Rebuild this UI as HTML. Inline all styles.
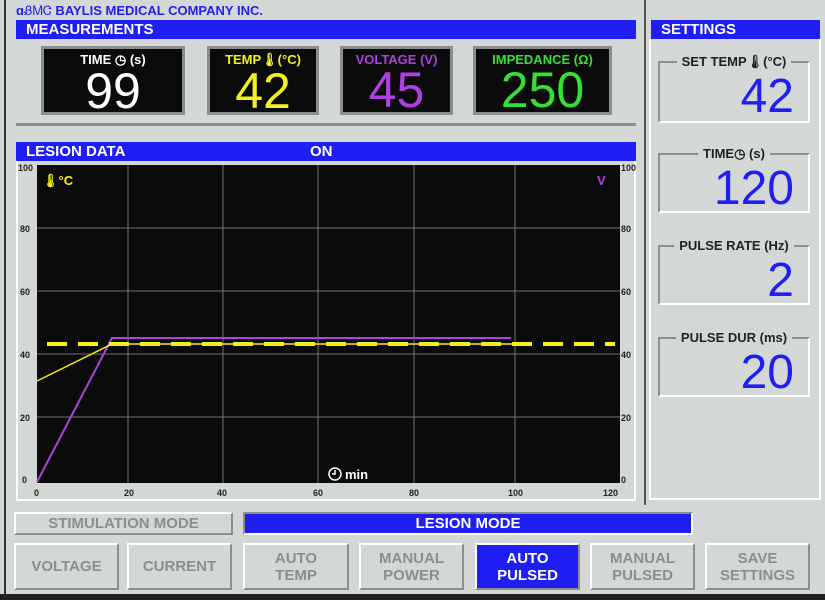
<!DOCTYPE html><html><head><style>
body{margin:0;width:825px;height:600px;background:#d3d7d5;position:relative;overflow:hidden;font-family:"Liberation Sans",sans-serif;font-weight:bold}
div{position:absolute;box-sizing:border-box}
.bar{background:#1f1ff5;color:#fff;font-size:15px;line-height:19px;padding-left:10px}
.mb{background:#0b0b0b;border:3px solid #8a8e8c;text-align:center}
.mb .l{position:static;font-size:13px;margin-top:3px}
.mb .v{position:static;font-size:50px;font-weight:normal;line-height:46px}
.sb{border:2px solid #8a8e8c;border-right-color:#fff;border-bottom-color:#fff}
.sb .l{top:-10px;left:0;right:0;text-align:center}
.sb .l span{background:#d3d7d5;padding:0 5px;font-size:13px;color:#222}
.sb .v{right:14px;top:10px;font-size:48px;font-weight:normal;color:#1f1ff5;line-height:48px}
.btn{border:2px solid #fff;border-right-color:#8a8e8c;border-bottom-color:#8a8e8c;color:#8a8e8c;font-size:15px;text-align:center;display:flex;align-items:center;justify-content:center;line-height:17px}
</style></head><body>
<div style="left:4px;top:0;width:2px;height:600px;background:#333"></div>
<div style="left:644px;top:0;width:2px;height:505px;background:#555"></div>
<div style="left:0;top:594px;width:825px;height:6px;background:#222"></div>
<div style="left:16px;top:3px;font-size:13px;color:#1f1ff5">ɑ<span style="font-weight:normal">ᏰᎷᏣ</span> BAYLIS MEDICAL COMPANY INC.</div>
<div class="bar" style="left:16px;top:20px;width:620px;height:19px">MEASUREMENTS</div>
<div style="left:16px;top:39px;width:620px;height:87px;border-bottom:3px solid #8a8e8c"></div>
<div class="mb" style="left:41px;top:46px;width:144px;height:69px;color:#fff"><div class="l">TIME ◷ (s)</div><div class="v">99</div></div>
<div class="mb" style="left:207px;top:46px;width:112px;height:69px;color:#f4f01c"><div class="l">TEMP🌡(°C)</div><div class="v">42</div></div>
<div class="mb" style="left:340px;top:46px;width:113px;height:69px;color:#b040e0"><div class="l">VOLTAGE (V)</div><div class="v">45</div></div>
<div class="mb" style="left:473px;top:46px;width:139px;height:69px;color:#33e033"><div class="l">IMPEDANCE (Ω)</div><div class="v">250</div></div>
<div class="bar" style="left:16px;top:142px;width:620px;height:19px">LESION DATA<span style="position:absolute;left:294px">ON</span></div>
<div style="left:16px;top:161px;width:620px;height:340px;border:2px solid #fff;border-top:none"></div>
<svg style="position:absolute;left:0;top:0" width="825" height="600">
<rect x="37" y="165" width="583" height="318" fill="#0b0b0b"/>
<g stroke="#6f7371" stroke-width="1">
<line x1="128" y1="165" x2="128" y2="483"/><line x1="223" y1="165" x2="223" y2="483"/><line x1="318" y1="165" x2="318" y2="483"/><line x1="414" y1="165" x2="414" y2="483"/><line x1="515" y1="165" x2="515" y2="483"/>
<line x1="37" y1="228" x2="620" y2="228"/><line x1="37" y1="291" x2="620" y2="291"/><line x1="37" y1="354" x2="620" y2="354"/><line x1="37" y1="417" x2="620" y2="417"/>
</g>
<polyline points="37,482 112,338 511,338" fill="none" stroke="#b040e0" stroke-width="2"/>
<polyline points="37,381 112,344 520,344" fill="none" stroke="#f4f01c" stroke-width="1.5"/>
<line x1="47" y1="344" x2="615" y2="344" stroke="#f4f01c" stroke-width="4" stroke-dasharray="20,11"/>
<g font-family="Liberation Sans" font-weight="bold" font-size="9" fill="#222">
<text x="18" y="171">100</text><text x="20" y="232">80</text><text x="20" y="295">60</text><text x="20" y="358">40</text><text x="20" y="421">20</text><text x="22" y="483">0</text>
<text x="621" y="171">100</text><text x="621" y="232">80</text><text x="621" y="295">60</text><text x="621" y="358">40</text><text x="621" y="421">20</text><text x="621" y="483">0</text>
<text x="34" y="496">0</text><text x="124" y="496">20</text><text x="217" y="496">40</text><text x="313" y="496">60</text><text x="409" y="496">80</text><text x="508" y="496">100</text><text x="603" y="496">120</text>
</g>
<text x="42" y="185" fill="#f4f01c" font-family="Liberation Sans" font-weight="bold" font-size="13">🌡°C</text>
<text x="597" y="185" fill="#b040e0" font-family="Liberation Sans" font-weight="bold" font-size="13">V</text>
<circle cx="335" cy="474" r="6" fill="none" stroke="#fff" stroke-width="1.5"/><path d="M335 470v4h-3" stroke="#fff" fill="none" stroke-width="1.5"/>
<text x="345" y="479" fill="#fff" font-family="Liberation Sans" font-weight="bold" font-size="13">min</text>
</svg>
<div class="bar" style="left:651px;top:20px;width:169px;height:19px">SETTINGS</div>
<div style="left:649px;top:39px;width:172px;height:461px;border:2px solid #fff;border-top:none"></div>
<div class="sb" style="left:658px;top:61px;width:152px;height:62px"><div class="l"><span>SET TEMP🌡(°C)</span></div><div class="v">42</div></div>
<div class="sb" style="left:658px;top:153px;width:152px;height:60px"><div class="l"><span>TIME◷ (s)</span></div><div class="v">120</div></div>
<div class="sb" style="left:658px;top:245px;width:152px;height:60px"><div class="l"><span>PULSE RATE (Hz)</span></div><div class="v">2</div></div>
<div class="sb" style="left:658px;top:337px;width:152px;height:60px"><div class="l"><span>PULSE DUR (ms)</span></div><div class="v">20</div></div>
<div class="btn" style="left:14px;top:512px;width:219px;height:23px">STIMULATION MODE</div>
<div style="left:243px;top:512px;width:450px;height:23px;background:#1f1ff5;border:2px solid #fff;border-top-color:#8a8e8c;border-left-color:#8a8e8c;color:#fff;font-size:15px;text-align:center;line-height:19px">LESION MODE</div>
<div class="btn" style="left:14px;top:543px;width:105px;height:47px">VOLTAGE</div>
<div class="btn" style="left:127px;top:543px;width:105px;height:47px">CURRENT</div>
<div class="btn" style="left:243px;top:543px;width:106px;height:47px">AUTO<br>TEMP</div>
<div class="btn" style="left:359px;top:543px;width:105px;height:47px">MANUAL<br>POWER</div>
<div class="btn" style="left:475px;top:543px;width:105px;height:47px;background:#1f1ff5;color:#fff">AUTO<br>PULSED</div>
<div class="btn" style="left:590px;top:543px;width:105px;height:47px">MANUAL<br>PULSED</div>
<div class="btn" style="left:705px;top:543px;width:105px;height:47px">SAVE<br>SETTINGS</div>
</body></html>
